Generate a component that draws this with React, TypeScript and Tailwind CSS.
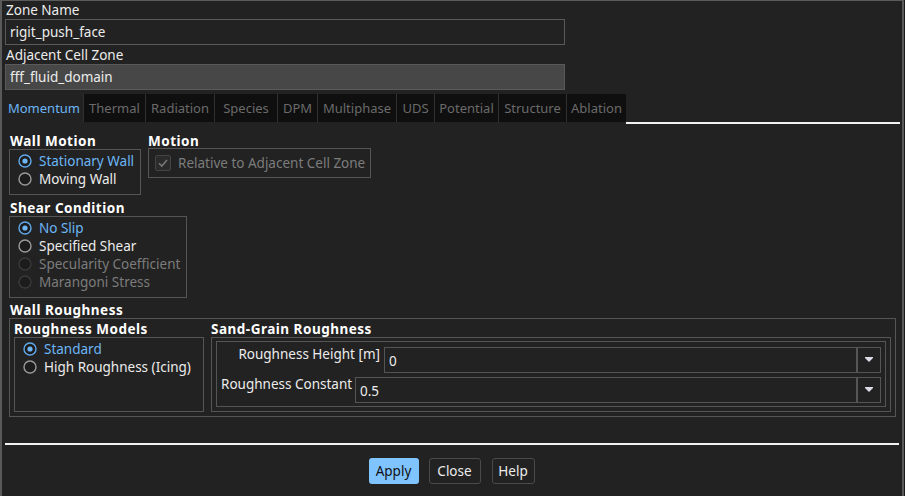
import React from "react";

const F = "font-['Noto_Sans',sans-serif] text-[13.5px] leading-[16px]";

function Radio({ checked = false, disabled = false, label }: { checked?: boolean; disabled?: boolean; label: string }) {
  const ring = checked ? "#5fa9ea" : disabled ? "#3a3a3a" : "#9a9a9a";
  const color = checked ? "text-[#6cb6f6]" : disabled ? "text-[#7c7c7c]" : "text-[#ececec]";
  return (
    <div className="flex items-center h-[18px] gap-[7px]">
      <svg width="14" height="14" viewBox="0 0 14 14" className="shrink-0">
        <circle cx="7" cy="7" r="6" fill="#1c1c1c" stroke={ring} strokeWidth="1.4" />
        {checked && <circle cx="7" cy="7" r="2.6" fill="#6cb6f6" />}
      </svg>
      <span className={`${color} whitespace-nowrap`}>{label}</span>
    </div>
  );
}

function Header({ children }: { children: React.ReactNode }) {
  return <div className="h-[16px] font-bold tracking-[0.5px] text-white whitespace-nowrap">{children}</div>;
}

function Arrow() {
  return (
    <svg width="10" height="6" viewBox="0 0 10 6">
      <rect x="1" y="0" width="8" height="1" fill="#dcdce8" />
      <polygon points="1,1 9,1 5,5" fill="#dcdce8" />
    </svg>
  );
}

function Combo({ value }: { value: string }) {
  return (
    <div className="flex-1 h-[26px] border border-[#555] flex">
      <div className="flex-1 pl-[4px] pt-[5px] text-[#ececec]">{value}</div>
      <div className="w-[24px] border-l-2 border-[#555] flex items-center justify-center">
        <Arrow />
      </div>
    </div>
  );
}

const tabs: [string, number][] = [
  ["Thermal", 62],
  ["Radiation", 69],
  ["Species", 63],
  ["DPM", 40],
  ["Multiphase", 79],
  ["UDS", 38],
  ["Potential", 64],
  ["Structure", 68],
  ["Ablation", 60],
];

export default function App() {
  return (
    <div className={`w-[905px] h-[496px] bg-[#1a1a1a] ${F}`}>
      <div className="w-[904px] h-[496px] bg-[#222222] border-l-2 border-t border-r-2 border-[#5a5a5a] pl-[3px] pr-[2px] text-[#ececec]">
        <div className="pl-[1px] h-[17px] pt-[1px]">Zone Name</div>
        <div className="mt-[1px] w-[560px] h-[26px] border border-[#5a5a5a] pl-[4px] pt-[4px]">rigit_push_face</div>
        <div className="mt-[2px] pl-[1px] h-[16px]">Adjacent Cell Zone</div>
        <div className="mt-[1px] w-[560px] h-[26px] border border-[#5a5a5a] bg-[#474747] pl-[4px] pt-[4px]">fff_fluid_domain</div>

        <div className="mt-[4px] flex h-[30px] w-[895px] text-[13px]">
          <div className="w-[78px] h-[28px] flex items-center justify-center text-[#6cb6f6]">Momentum</div>
          {tabs.map(([t, w]) => (
            <div
              key={t}
              style={{ width: w }}
              className="h-[28px] bg-[#0f0f0f] border-l border-[#303030] flex items-center justify-center text-[#6a6a6a]"
            >
              {t}
            </div>
          ))}
          <div className="flex-1 h-[30px] border-b-2 border-[#f2f2f2]"></div>
        </div>

        <div className="pl-[4px]">
          <div className="mt-[9px] flex gap-[7px]">
            <div className="pl-[1px]">
              <Header>Wall Motion</Header>
              <div className="-ml-[1px] w-[132px] h-[46px] border border-[#555] pl-[8px] pt-[2px]">
                <Radio checked label="Stationary Wall" />
                <Radio label="Moving Wall" />
              </div>
            </div>
            <div>
              <Header>Motion</Header>
              <div className="-mt-[1px] w-[223px] h-[30px] border border-[#555] pl-[6px] flex items-center gap-[7px]">
                <div className="w-[16px] h-[16px] rounded-[2px] border border-[#444] bg-[#2b2b2b] flex items-center justify-center">
                  <svg width="12" height="12" viewBox="0 0 12 12">
                    <path d="M2 6.2 L4.8 9 L10 3" fill="none" stroke="#777" strokeWidth="1.6" />
                  </svg>
                </div>
                <span className="text-[#7c7c7c] whitespace-nowrap">Relative to Adjacent Cell Zone</span>
              </div>
            </div>
          </div>

          <div className="mt-[5px] pl-[1px]">
            <Header>Shear Condition</Header>
          </div>
          <div className="w-[178px] h-[82px] border border-[#555] pl-[8px] pt-[2px]">
            <Radio checked label="No Slip" />
            <Radio label="Specified Shear" />
            <Radio disabled label="Specularity Coefficient" />
            <Radio disabled label="Marangoni Stress" />
          </div>

          <div className="mt-[4px] pl-[1px]">
            <Header>Wall Roughness</Header>
          </div>
          <div className="w-[887px] h-[99px] border border-[#555] pl-[4px] pr-[4px] pt-[2px] flex gap-[7px]">
            <div className="w-[190px]">
              <Header>Roughness Models</Header>
              <div className="h-[75px] border border-[#555] pl-[8px] pt-[2px]">
                <Radio checked label="Standard" />
                <Radio label="High Roughness (Icing)" />
              </div>
            </div>
            <div className="flex-1">
              <Header>Sand-Grain Roughness</Header>
              <div className="h-[75px] border border-[#555] pl-[4px] pr-[4px] pt-[3px]">
                <div className="h-[66px] border border-[#555] px-[4px] pt-[5px]">
                  <div className="flex items-start h-[26px] gap-[4px]">
                    <div className="w-[159px] -mt-[1px] text-right whitespace-nowrap">Roughness Height [m]</div>
                    <Combo value="0" />
                  </div>
                  <div className="flex items-start h-[26px] gap-[2px] mt-[4px]">
                    <div className="w-[132px] -mt-[1px] whitespace-nowrap">Roughness Constant</div>
                    <Combo value="0.5" />
                  </div>
                </div>
              </div>
            </div>
          </div>
        </div>

        <div className="mt-[26px] h-[2px] w-[894px] bg-[#f2f2f2]"></div>

        <div className="mt-[13px] flex justify-center gap-[10px] pr-[2px]">
          <div className="w-[50px] h-[26px] rounded-[3px] bg-[#7fc3ff] text-[#111] flex items-center justify-center">Apply</div>
          <div className="w-[52px] h-[26px] rounded-[3px] border border-[#4a4a4a] flex items-center justify-center">Close</div>
          <div className="w-[43px] h-[26px] rounded-[3px] border border-[#4a4a4a] flex items-center justify-center ml-[1px]">Help</div>
        </div>
      </div>
    </div>
  );
}
